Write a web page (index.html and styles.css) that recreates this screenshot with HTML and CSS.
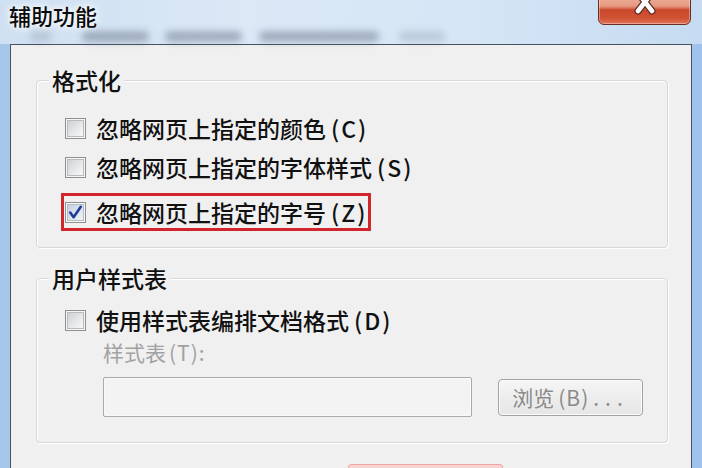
FILE: index.html
```html
<!DOCTYPE html>
<html lang="zh-CN">
<head>
<meta charset="utf-8">
<title>辅助功能</title>
<link rel="stylesheet" href="styles.css">
</head>
<body>
<div class="window">
  <div class="titlebar">
    <div class="title">辅助功能</div>
    <div class="ghost" aria-hidden="true">
      <span class="blob faint w1"></span>
      <span class="blob w2"></span>
      <span class="blob w3"></span>
      <span class="blob w4"></span>
      <span class="blob faint w5"></span>
    </div>
    <div class="close">
      <svg width="24" height="20" viewBox="0 0 24 20">
        <path d="M5 -2 L19 16 M19 -2 L5 16" stroke="#5a2a20" stroke-width="7" stroke-linecap="round" fill="none"/>
        <path d="M5 -2 L19 16 M19 -2 L5 16" stroke="#ffffff" stroke-width="4.6" stroke-linecap="round" fill="none"/>
      </svg>
    </div>
  </div>

  <div class="client">
    <fieldset class="group">
      <legend>格式化</legend>
      <div class="group-body rows">
        <label class="row"><span class="cb"></span><span class="txt">忽略网页上指定的颜色<span class="acc">(C)</span></span></label>
        <label class="row"><span class="cb"></span><span class="txt">忽略网页上指定的字体样式<span class="acc">(S)</span></span></label>
        <label class="row flagged"><span class="cb on"><svg width="19" height="19" viewBox="0 0 19 19"><path d="M4.2 9.6 L7.6 14.2 L14.8 3.8" stroke="#1f3d98" stroke-width="2.6" stroke-linecap="round" stroke-linejoin="round" fill="none"/></svg></span><span class="txt">忽略网页上指定的字号<span class="acc">(Z)</span></span></label>
      </div>
    </fieldset>

    <fieldset class="group second">
      <legend>用户样式表</legend>
      <div class="group-body user">
        <label class="row"><span class="cb"></span><span class="txt">使用样式表编排文档格式<span class="acc">(D)</span></span></label>
        <div class="sub-label">样式表<span class="acc">(T)</span>:</div>
        <div class="field-row">
          <input class="field" type="text" disabled>
          <button class="browse" type="button" disabled>浏览<span class="acc">(B)</span><span class="dots">...</span></button>
        </div>
      </div>
    </fieldset>

    <div class="footer">
      <span class="ok"></span>
    </div>
  </div>
</div>
</body>
</html>
```

FILE: styles.css
```css
html, body {
  margin: 0;
  padding: 0;
}

body {
  width: 702px;
  height: 468px;
  overflow: hidden;
  background: linear-gradient(90deg, #a6c6ea 0%, #b9d2ee 50%, #9fc3ec 100%);
  font-family: "Noto Sans CJK SC", "Noto Sans", sans-serif;
  color: #111;
}

.window {
  width: 702px;
  height: 468px;
}

/* ---------- title bar ---------- */
.titlebar {
  height: 44px;
  display: grid;
  grid-template-columns: 1fr auto;
  grid-template-rows: 28px 16px;
  background: linear-gradient(90deg, #cfe0f2 0%, #dbe8f6 35%, #d6e6f6 65%, #c6dbf1 100%);
}

.title {
  grid-column: 1;
  grid-row: 1;
  padding: 2px 0 0 9px;
  font-size: 22px;
  line-height: 26px;
  font-weight: 500;
  color: #0a0a0a;
  text-shadow: 0 0 6px #ffffff, 0 0 10px #ffffff;
}

.ghost {
  grid-column: 1;
  grid-row: 2;
  display: flex;
  align-items: center;
}

.blob {
  height: 11px;
  border-radius: 5px;
  background: rgba(70, 82, 105, 0.38);
  filter: blur(3.5px);
}
.blob.faint { background: rgba(70, 82, 105, 0.18); }
.w1 { margin-left: 30px; width: 22px; }
.w2 { margin-left: 30px; width: 67px; }
.w3 { margin-left: 16px; width: 77px; }
.w4 { margin-left: 17px; width: 120px; }
.w5 { margin-left: 20px; width: 46px; }

.close {
  grid-column: 2;
  grid-row: 1 / span 2;
  align-self: start;
  width: 93px;
  height: 31px;
  margin: -6px 11px 0 0;
  box-sizing: border-box;
  border: 1px solid #6a2e22;
  border-radius: 0 0 6px 6px;
  background: linear-gradient(180deg, #eeb09c 0%, #e69a82 38%, #c9472a 52%, #cf5233 80%, #e2745a 100%);
  box-shadow: inset 0 0 0 1px rgba(255, 255, 255, 0.35);
  display: flex;
  justify-content: center;
  align-items: flex-end;
  padding-bottom: 9px;
}

/* ---------- client area ---------- */
.client {
  margin: 0 10px;
  height: 424px;
  box-sizing: border-box;
  border: 1px solid #46525f;
  border-bottom: none;
  background: #f0f0f0;
}

.group {
  margin: 20px 0 0 25px;
  width: 632px;
  box-sizing: border-box;
  padding: 0;
  border: 1px solid #d5d7d9;
  border-radius: 4px;
  box-shadow: inset 1px 1px 0 #ffffff, 1px 1px 0 #ffffff;
  min-width: 0;
}

.group.second {
  margin-top: 15px;
}

.group legend {
  margin-left: 12px;
  padding: 0 3px;
  font-size: 23px;
  line-height: 30px;
  font-weight: 500;
  color: #111;
  background: #f0f0f0;
}

.group-body {
  padding-left: 28px;
}

.rows {
  display: flex;
  flex-direction: column;
  align-items: flex-start;
  gap: 9px;
  padding-top: 18px;
  padding-bottom: 20px;
}

.row {
  display: flex;
  align-items: center;
  gap: 10px;
  height: 30px;
  font-size: 23px;
  line-height: 30px;
  font-weight: 500;
  color: #111;
}

.row.flagged {
  margin-top: 6px;
  outline: 3px solid #d3252c;
  outline-offset: 1px;
}

.acc {
  margin-left: 5px;
  letter-spacing: 2px;
}

.cb {
  flex: none;
  width: 21px;
  height: 21px;
  box-sizing: border-box;
  border: 1px solid #8e8f8f;
  background: linear-gradient(135deg, #cfd1d4 10%, #f6f6f7 85%);
  box-shadow: inset 0 0 0 1px #f6f6f6, inset 0 0 0 2px #b8bcc1;
  display: flex;
  align-items: center;
  justify-content: center;
}

.cb.on {
  background: linear-gradient(135deg, #c3d0e4 10%, #eef2f8 85%);
}

/* ---------- user stylesheet group ---------- */
.user {
  display: flex;
  flex-direction: column;
  align-items: flex-start;
  padding-top: 12px;
  padding-bottom: 25px;
}

.sub-label {
  margin: 4px 0 0 38px;
  font-size: 21px;
  line-height: 26px;
  color: #a2a2a2;
}

.sub-label .acc {
  margin-left: 3px;
  letter-spacing: 1px;
}

.field-row {
  display: flex;
  align-items: center;
  gap: 26px;
  margin: 12px 0 0 38px;
}

.field {
  width: 369px;
  height: 40px;
  box-sizing: border-box;
  margin: 0;
  border: 1px solid #aaaaaa;
  border-radius: 2px;
  background: #f3f3f3;
  box-shadow: inset 0 0 0 1px #f9f9f9;
  appearance: none;
}

.browse {
  width: 145px;
  height: 37px;
  box-sizing: border-box;
  margin: 0;
  padding: 0;
  border: 1px solid #a3a3a3;
  border-radius: 4px;
  background: linear-gradient(180deg, #f6f6f6 0%, #ededed 50%, #e6e6e6 100%);
  box-shadow: inset 0 0 0 1px #fbfbfb;
  font-family: "Noto Sans CJK SC", "Noto Sans", sans-serif;
  font-size: 21px;
  line-height: 35px;
  color: #8a8a8a;
}

.browse .acc {
  margin-left: 4px;
  letter-spacing: 1px;
}

.browse .dots {
  margin-left: 4px;
  letter-spacing: 6px;
}

/* ---------- footer ---------- */
.footer {
  display: flex;
  padding: 21px 0 0 337px;
}

.ok {
  width: 155px;
  height: 30px;
  box-sizing: border-box;
  border: 1px solid #f0a4a4;
  border-radius: 3px 3px 0 0;
  background: #f9d2d2;
}
```
